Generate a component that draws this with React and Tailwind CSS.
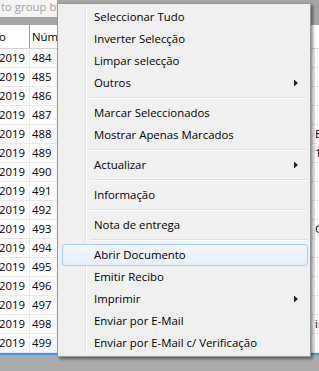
import React from "react";

const rows = [
  ["484", ""], ["485", ""], ["486", ""], ["487", ""], ["488", "E"], ["489", "1P"],
  ["490", ""], ["491", ""], ["492", ""], ["493", "GA"], ["494", ""], ["495", ""],
  ["496", ""], ["497", ""], ["498", "is"], ["499", ""],
];

const Arrow = () => (
  <svg width="4" height="7" viewBox="0 0 4 7" className="absolute right-[10px] top-1/2 -translate-y-1/2">
    <path d="M0 0 L4 3.5 L0 7 Z" fill="#222" />
  </svg>
);

function Item({ label, sub, hi }) {
  return (
    <div className="relative h-[22px] flex items-center">
      {hi && (
        <div className="absolute left-[2px] right-0 top-0 bottom-0 rounded-[3px] border border-[#a9cdf4] bg-gradient-to-b from-[#f1f6fd] to-[#e6effa]" />
      )}
      <span className="relative pl-[34px] whitespace-nowrap">{label}</span>
      {sub && <Arrow />}
    </div>
  );
}

function Sep() {
  return (
    <div className="h-[8px] flex flex-col justify-center pl-[30px] pr-[1px]">
      <div className="h-px bg-[#e0e0e0]" />
      <div className="h-px bg-white" />
    </div>
  );
}

export default function App() {
  const font = { fontFamily: '"Open Sans", "Noto Sans", sans-serif' };
  return (
    <div className="relative w-[319px] h-[371px] overflow-hidden bg-[#ababab] text-[11.4px] text-black" style={font}>
      {/* group panel */}
      <div className="h-[17px] bg-[#a5a5a5] flex">
        <div className="w-[57px] bg-[#f4f4f4] text-[#a2a2a2] pl-[1px] leading-[14px] whitespace-nowrap overflow-hidden">
          to group by that column
        </div>
      </div>
      <div className="h-[8px] bg-[#a5a5a5]" />
      {/* grid */}
      <div className="h-[330px] bg-white overflow-hidden">
        <div className="h-[24px] flex border-b border-[#d5d5d5] bg-white">
          <div className="w-[30px] border-r border-[#a0a0a0] flex items-center overflow-hidden">
            <span className="ml-[-1px]">o</span>
          </div>
          <div className="flex-1 flex items-center pl-[2px]">Número</div>
        </div>
        {rows.map(([n, r]) => (
          <div key={n} className="h-[19px] flex border-b border-[#e8e8e8]">
            <div className="w-[30px] border-r border-[#e8e8e8] flex items-center overflow-hidden">
              <span className="ml-[-1px]">2019</span>
            </div>
            <div className="w-[285px] flex items-center pl-[2px] border-r border-[#e8e8e8]">{n}</div>
            <div className="flex-1 flex items-center whitespace-nowrap overflow-hidden">{r}</div>
          </div>
        ))}
        <div className="h-[3px] bg-[#3399ff]" />
      </div>

      {/* context menu */}
      <div className="absolute left-[57px] top-[3px] w-[254px] h-[354px] bg-[#f0f0f0] border border-[#979797] shadow-[2px_2px_3px_rgba(0,0,0,0.45)] p-[2px]">
        <div className="absolute left-[27px] top-[2px] bottom-[2px] w-px bg-[#e2e3e3]" />
        <div className="absolute left-[28px] top-[2px] bottom-[2px] w-px bg-white" />
        <div className="relative">
          <Item label="Seleccionar Tudo" />
          <Item label="Inverter Selecção" />
          <Item label="Limpar selecção" />
          <Item label="Outros" sub />
          <Sep />
          <Item label="Marcar Seleccionados" />
          <Item label="Mostrar Apenas Marcados" />
          <Sep />
          <Item label="Actualizar" sub />
          <Sep />
          <Item label="Informação" />
          <Sep />
          <Item label="Nota de entrega" />
          <Sep />
          <Item label="Abrir Documento" hi />
          <Item label="Emitir Recibo" />
          <Item label="Imprimir" sub />
          <Item label="Enviar por E-Mail" />
          <Item label="Enviar por E-Mail c/ Verificação" />
        </div>
      </div>
    </div>
  );
}
